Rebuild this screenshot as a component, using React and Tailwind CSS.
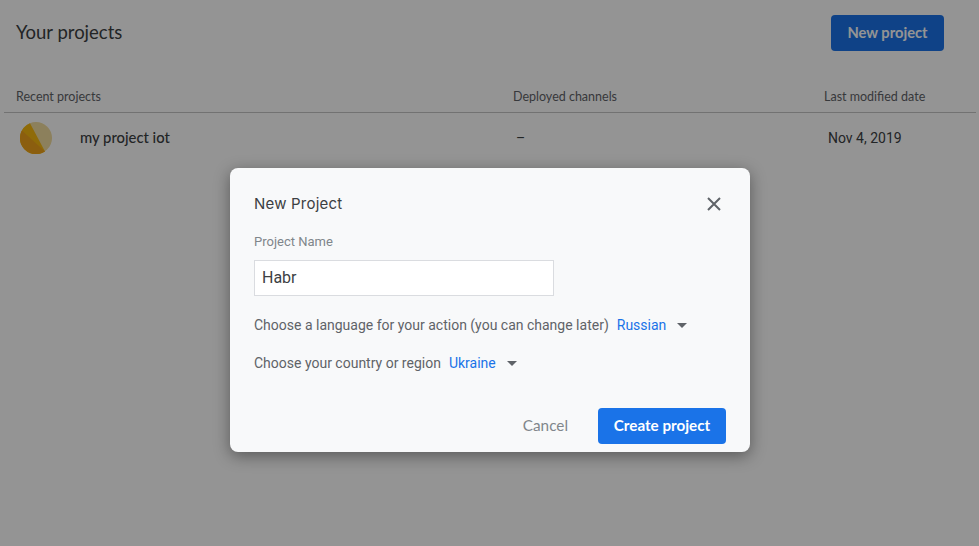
import React from "react";

function Caret() {
  return (
    <svg width="10" height="5" viewBox="0 0 10 5" className="block" aria-hidden="true">
      <path d="M0 0h10L5 5z" fill="#5f6368" />
    </svg>
  );
}

export default function App() {
  return (
    <div className="relative h-[546px] w-[979px] overflow-hidden bg-white font-['Roboto',sans-serif]">
      <div className="pt-[15px] pr-[35px] pl-4">
        <div className="flex items-center justify-between">
          <h1 className="font-['Lato',sans-serif] text-[18.5px] text-[#3c4043]">Your projects</h1>
          <button className="h-9 w-[113px] rounded bg-[#1a73e8] pb-[2px] font-['Lato',sans-serif] text-[14.7px] font-bold text-white">
            New project
          </button>
        </div>
      </div>
      <div className="mt-[37px] mr-[3px] ml-1 flex h-[25px] items-start border-b border-[#c4c4c4] pl-3 font-['Lato',sans-serif] text-[12.5px] text-[#5f6368]">
        <span className="w-[497px]">Recent projects</span>
        <span className="w-[311px]">Deployed channels</span>
        <span>Last modified date</span>
      </div>
      <div className="flex h-[50px] items-center pl-5">
        <svg width="32" height="32" viewBox="0 0 32 32" className="block" aria-hidden="true">
          <circle cx="16" cy="16" r="16" fill="#f2dc9f" />
          <path d="M10 1.2 L25 29.5 A16 16 0 0 1 0.1 14 A16 16 0 0 1 10 1.2Z" fill="#f6b90f" />
          <path d="M2 8.5 L25 29.5 A16 16 0 0 1 16 32 A16 16 0 0 1 0 16 A16 16 0 0 1 2 8.5Z" fill="#f0a31a" />
        </svg>
        <span className="ml-7 w-[433px] pb-px font-['Lato',sans-serif] text-[14.8px] font-medium text-[#3c4043]">my project iot</span>
        <span className="w-[315px] pl-[3px] text-sm text-[#3c4043]">–</span>
        <span className="text-sm text-[#3c4043]">Nov 4, 2019</span>
      </div>

      <div className="absolute inset-0 bg-black/[.42]" />

      <div className="absolute top-[168px] left-[230px] flex h-[284px] w-[520px] flex-col rounded-lg bg-[#f8f9fa] px-6 pt-[25px] shadow-[0_4px_16px_rgba(0,0,0,0.4)]">
        <div className="flex items-center justify-between">
          <h2 className="font-['Inter',sans-serif] text-[15px] font-normal tracking-[0.2px] text-[#3c4043]">New Project</h2>
          <svg width="14" height="14" viewBox="0 0 14 14" className="mr-[5px] block" aria-hidden="true">
            <path d="M1 1l12 12M13 1L1 13" stroke="#5f6368" strokeWidth="2" fill="none" />
          </svg>
        </div>
        <label className="mt-[16px] text-[13px] text-[#80868b]">Project Name</label>
        <div className="mt-[9px] flex h-9 w-[300px] items-center border border-[#dadce0] bg-white px-[7px] pb-px text-base text-[#3c4043]">
          Habr
        </div>
        <div className="mt-[19px] flex items-center text-sm text-[#5f6368]">
          <span>Choose a language for your action (you can change later)</span>
          <span className="ml-2 text-[#1a73e8]">Russian</span>
          <span className="ml-[11px]"><Caret /></span>
        </div>
        <div className="mt-[18px] flex items-center text-sm text-[#5f6368]">
          <span>Choose your country or region</span>
          <span className="ml-2 text-[#1a73e8]">Ukraine</span>
          <span className="ml-[11px]"><Caret /></span>
        </div>
        <div className="mt-[35px] flex items-center justify-end">
          <button className="mr-[30px] pb-[2px] font-['Lato',sans-serif] text-[15.3px] text-[#80868b]">Cancel</button>
          <button className="h-9 w-[128px] rounded bg-[#1a73e8] pb-[2px] font-['Lato',sans-serif] text-[15.2px] font-bold text-white">
            Create project
          </button>
        </div>
      </div>
    </div>
  );
}
